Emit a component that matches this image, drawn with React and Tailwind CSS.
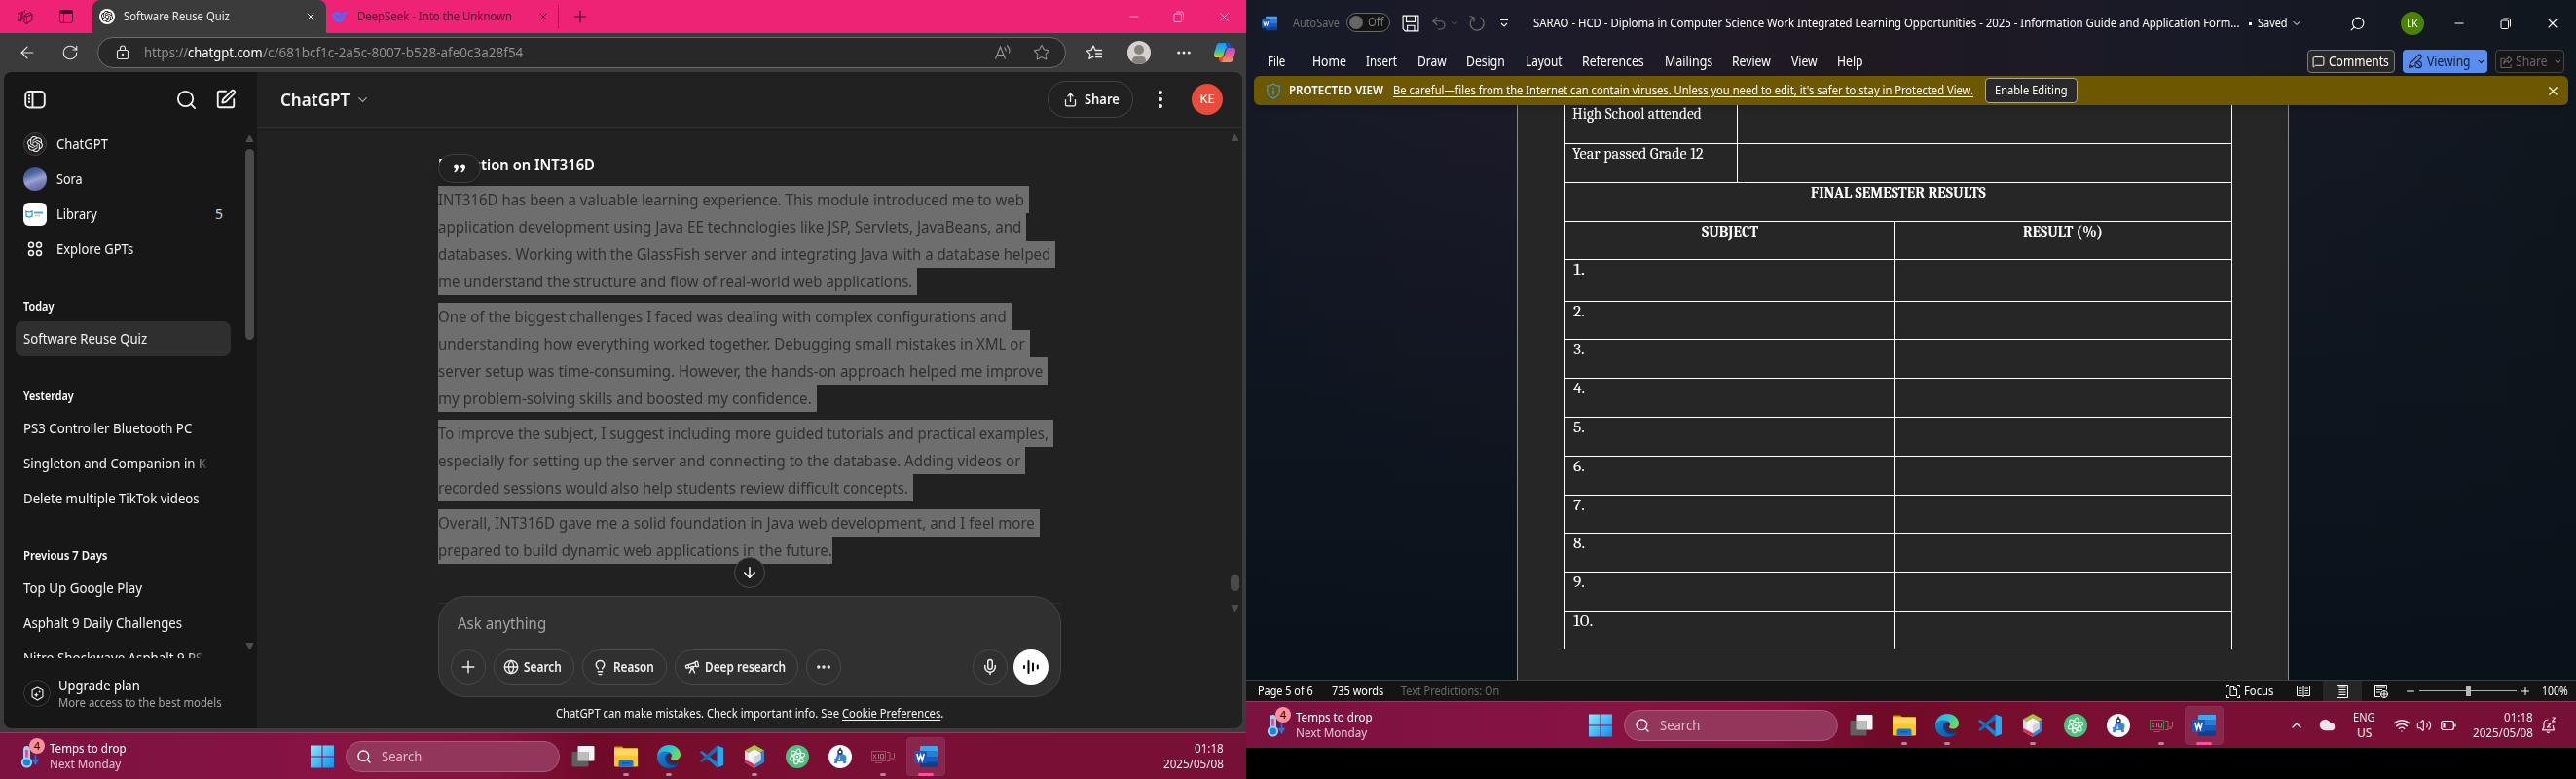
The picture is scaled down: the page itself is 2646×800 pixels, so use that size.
import React, { useLayoutEffect, useRef, useState } from "react";
import {
  ArrowLeft, ArrowDown, RotateCw, X, Plus, Minus, Search, Star, ChevronDown, ChevronUp,
  Globe, Lightbulb, Telescope, Mic, Ellipsis, EllipsisVertical, Share, SquarePen,
  Undo2, Wifi, Volume2, Cloud, MessageSquare,
} from "lucide-react";
import { SiOpenai } from "react-icons/si";

/* One line of text, condensed or widened so that it fills the given width. */
function Fit({ w, className = "", children }) {
  const ref = useRef(null);
  const [scale, setScale] = useState(1);
  useLayoutEffect(() => {
    setScale(w / ref.current.offsetWidth);
  }, [w, children]);
  return (
    <span className={"block shrink-0 whitespace-pre " + className} style={{ width: w }}>
      <span ref={ref} className="inline-block origin-left align-top [text-decoration:inherit]" style={{ transform: `scaleX(${scale})` }}>{children}</span>
    </span>
  );
}

/* ---------- small drawings ---------- */
const WordIcon = ({ className }) => (
  <svg viewBox="0 0 24 24" className={className}>
    <rect x="6" y="1" width="18" height="6" rx="1" fill="#41a5ee" />
    <rect x="6" y="6" width="18" height="6" fill="#2b7cd3" />
    <rect x="6" y="12" width="18" height="6" fill="#185abd" />
    <path d="M6 17.500h18V22a1 1 0 0 1-1 1H7a1 1 0 0 1-1-1z" fill="#103f91" />
    <rect x="0" y="6" width="13" height="13" rx="1.2" fill="#185abd" />
    <path d="M2.800 9l1.900 7 1.800-6 1.800 6 1.900-7" fill="none" stroke="#fff" strokeWidth="1.500" />
  </svg>
);
const WeatherIcon = () => (
  <svg viewBox="0 0 24 32" className="h-8 w-6">
    <rect x="3" y="7" width="7" height="18" rx="3.5" fill="#9cd0f5" />
    <rect x="5.2" y="11" width="2.6" height="13" fill="#e0457b" />
    <circle cx="6.5" cy="24" r="5.6" fill="#9cd0f5" />
    <circle cx="6.5" cy="24" r="3.6" fill="#1a86d8" />
    <path d="M15.500 16v7M13 21.500l2.500 4 2.500-4z" stroke="#2f6fe0" strokeWidth="1.500" fill="#2f6fe0" />
  </svg>
);
const WindowsLogo = () => (
  <svg viewBox="0 0 24 24" className="size-6">
    <defs>
      <linearGradient id="win" x1="0" y1="0" x2="1" y2="1">
        <stop offset="0" stopColor="#8beaff" /><stop offset="1" stopColor="#0a8ff0" />
      </linearGradient>
    </defs>
    <path d="M0 .5h11.500v11H0zM12.500.5H24v11H12.500zM0 12.500h11.500v11H0zM12.500 12.500H24v11H12.500z" fill="url(#win)" />
  </svg>
);
const TaskView = () => (
  <svg viewBox="0 0 24 24" className="size-6">
    <rect x="6.500" y="1" width="17" height="15.500" rx="1" fill="#f4f4f4" />
    <rect x="0.500" y="7" width="17" height="15.500" rx="1" fill="#5f5f5f" />
    <rect x="6.500" y="7" width="11" height="9.500" fill="#bdbdbd" />
  </svg>
);
const Folder = () => (
  <svg viewBox="0 0 24 24" className="size-6">
    <path d="M0 2.500a1 1 0 0 1 1-1h7l2.500 2.500H0z" fill="#d9930a" />
    <rect x="0" y="3.500" width="24" height="19" rx="1" fill="#fdc62f" />
    <path d="M0 3.500h24v7H0z" fill="#ffd75e" />
    <path d="M4.500 22.500v-5a2 2 0 0 1 2-2h11a2 2 0 0 1 2 2v5z" fill="#1478cf" />
    <path d="M8 18.800h8" stroke="#0b4f92" strokeWidth="1.200" />
  </svg>
);
const EdgeLogo = () => (
  <svg viewBox="0 0 24 24" className="size-6">
    <defs>
      <linearGradient id="edg" x1="0" y1="0" x2="1" y2=".4">
        <stop offset="0" stopColor="#2aa9e8" /><stop offset=".55" stopColor="#2cc5cf" /><stop offset="1" stopColor="#68dd5a" />
      </linearGradient>
      <linearGradient id="edb" x1="0" y1="0" x2="1" y2="1">
        <stop offset="0" stopColor="#0f8fe0" /><stop offset="1" stopColor="#0c4a94" />
      </linearGradient>
    </defs>
    <path d="M0 12a12 12 0 0 1 12-12c7 0 12 4.600 12 10 0 3.500-2.800 5.600-6 5.600-2.400 0-4-.8-4-1.800 0-.7 1-1.200 1-2.800C15 8.500 12.500 7 9 7c-4 0-8 2-9 5z" fill="url(#edg)" />
    <path d="M0 12c.8-3.500 4.500-5.500 8.500-5.500 2.500 0 4.500.8 5.500 2-4-.5-6 2.500-5.500 6 .5 4 4 6.500 7.500 6.500 2 0 4-.7 5.800-1.800C19.500 22.500 15.800 24 12 24 5 24 0 18.500 0 12z" fill="url(#edb)" />
    <path d="M8.400 14c.2 4 3.600 7 7.600 7 2 0 4-.7 5.800-1.800.5-.6.200-1-.5-.7-5.300 2.200-10.300-.5-10.300-5 0-2 1-3.300 2.300-4-3-.6-5 1.500-4.900 4.500z" fill="#0a3f80" />
  </svg>
);
const VsCode = () => (
  <svg viewBox="0 0 24 24" className="size-6">
    <path d="M0 7.500l2-1.500 15.500 12v5.500z" fill="#1284d2" />
    <path d="M0 16.500L2 18 17.500 6V.5z" fill="#0a6ebd" />
    <path d="M17.500.5L24 3v18l-6.500 2.500z" fill="#29a8f1" />
  </svg>
);
const NetBeans = () => (
  <svg viewBox="0 0 24 24" className="size-6">
    <path d="M12 0l10 5.500-10 6-10-6z" fill="#a6c04a" />
    <path d="M2 5.500l10 6V24L2 18z" fill="#d8d8de" />
    <path d="M22 5.500l-10 6V24l10-6z" fill="#3f7fd0" />
    <path d="M2 15l10 5v4L2 18z" fill="#d4305c" />
    <path d="M12 4.500l6.500 3.800v7.500L12 20l-6.500-4.200V8.300z" fill="#f4f4f4" />
    <path d="M12 12l6.500-3.700v7.500L12 20z" fill="#cfd2d8" />
  </svg>
);
const Atom = () => (
  <svg viewBox="0 0 24 24" className="size-6">
    <circle cx="12" cy="12" r="12" fill="#4fbf80" />
    <g fill="none" stroke="#e8f8ee" strokeWidth="1.100">
      <ellipse cx="12" cy="12" rx="3" ry="8" transform="rotate(12 12 12)" />
      <ellipse cx="12" cy="12" rx="3" ry="8" transform="rotate(72 12 12)" />
      <ellipse cx="12" cy="12" rx="3" ry="8" transform="rotate(132 12 12)" />
    </g>
    <circle cx="12" cy="12" r="1.300" fill="#fff" />
  </svg>
);
const Studio = () => (
  <svg viewBox="0 0 24 24" className="size-6">
    <circle cx="12" cy="12" r="12" fill="#fff" />
    <circle cx="15" cy="13" r="3.500" fill="#36a566" />
    <path d="M12 6.500L7 19M12 6.500L17 19" stroke="#3b7df0" strokeWidth="3" fill="none" />
    <path d="M6 14.500c3.500 2.500 8.500 2.500 12 0" stroke="#3b7df0" strokeWidth="1.800" fill="none" />
    <circle cx="12" cy="7" r="2" fill="#fff" stroke="#253445" strokeWidth="1.400" />
    <path d="M12 2.800v2.500" stroke="#253445" strokeWidth="1.600" />
  </svg>
);
const X10 = () => (
  <svg viewBox="0 0 24 24" className="size-6">
    <rect x=".5" y="6.500" width="14" height="10" fill="none" stroke="#2f8a46" />
    <path d="M2 9.500l3 4.500M5 9.500L2 14M7.500 9v5M9.500 9.500h3v4.500h-3z" stroke="#a8908f" strokeWidth=".8" fill="none" />
    <path d="M16 7.500h3v9h-3M21 13v3M23.500 8v5l-2 3" stroke="#a8606f" strokeWidth="1" fill="none" />
    <path d="M4 18.500h7" stroke="#2f8a46" strokeWidth="1" />
  </svg>
);
const Restore = ({ className }) => (
  <svg viewBox="0 0 12 12" className={className} fill="none" stroke="currentColor">
    <rect x="1" y="3" width="7.500" height="8.500" rx="1" />
    <path d="M3.500 1h5a2 2 0 0 1 2 2v6.500" />
  </svg>
);
const Copilot = () => (
  <svg viewBox="0 0 22 20" className="h-5 w-[22px]">
    <defs>
      <linearGradient id="cpa" x1="0" y1="0" x2="0" y2="1">
        <stop offset="0" stopColor="#1d8ff2" /><stop offset=".5" stopColor="#28b8d8" /><stop offset=".8" stopColor="#7fca4d" /><stop offset="1" stopColor="#f0c62c" />
      </linearGradient>
      <linearGradient id="cpb" x1="0" y1="0" x2="0" y2="1">
        <stop offset="0" stopColor="#a64de8" /><stop offset=".5" stopColor="#ef5a93" /><stop offset="1" stopColor="#fb9a4b" />
      </linearGradient>
    </defs>
    <path d="M6 0h8c1.500 0 2 1 2.500 2.500L17 5h-3c-2 0-2.500 1-3 3l-1.500 5c-.5 1.500-1 2-2.500 2H3c-2.500 0-3.500-2-2.800-4.500L2.500 3C3 1 4 0 6 0z" fill="url(#cpa)" />
    <path d="M12 0h2c1.500 0 2 1 2.500 2.500L17 5h-4z" fill="#1a49c9" />
    <path d="M16 20H8c-1.500 0-2-1-2.500-2.500L5 15h3c2 0 2.500-1 3-3l1.500-5c.5-1.500 1-2 2.500-2h4c2.500 0 3.500 2 2.800 4.500L19.500 17c-.5 2-1.500 3-3.500 3z" fill="url(#cpb)" />
    <path d="M5 15h4l-.5 5H8c-1.500 0-2-1-2.500-2.500z" fill="#f0442e" />
  </svg>
);
const Tri = ({ down }) => (
  <svg viewBox="0 0 9 8" className="h-[8px] w-[9px]">
    <path d={down ? "M1 .5h7L4.500 7z" : "M1 7.500h7L4.500 1z"} fill="#4d4d4d" stroke="#4d4d4d" strokeLinejoin="round" />
  </svg>
);
const SidebarIcon = () => (
  <svg viewBox="0 0 24 24" className="size-6" fill="none" stroke="#f0f0f0" strokeWidth="1.900">
    <rect x="2.200" y="4" width="19.600" height="16.500" rx="4" />
    <path d="M9.500 4v16.500M5 8.200h2M5 11.500h2M5 14.800h2" />
  </svg>
);
const SleepBell = ({ className }) => (
  <svg viewBox="0 0 16 18" className={className} fill="none" stroke="currentColor" strokeWidth="1.200" strokeLinejoin="round">
    <path d="M7.500 3C4.500 3 3 5 3 7.500V11l-1.500 2.800h12L12.500 11V9M6 15.500a1.700 1.700 0 0 0 3 0" />
    <path d="M6.500 7h3.500l-3.500 4H10M11.500 1h3l-3 3.800h3" />
  </svg>
);
const ViewingPen = ({ className }) => (
  <svg viewBox="0 0 18 18" className={className} fill="none" stroke="currentColor" strokeWidth="1.200" strokeLinejoin="round">
    <path d="M1.500 16.500l1-4.500L12.500 2a2 2 0 0 1 3 3L12 8.500M1.500 16.500L6 15.500M2.500 12L6 15.500l1.500-1.500" />
    <circle cx="12.500" cy="12.800" r="3.700" /><path d="M10 10.200l5 5.200" />
  </svg>
);
const ShareOut = ({ className }) => (
  <svg viewBox="0 0 14 14" className={className} fill="none" stroke="currentColor" strokeWidth="1.100" strokeLinejoin="round">
    <path d="M5 3.500H1v10h11V10" /><path d="M9 1l4 3.800-4 3.700V6.300C6.500 6.200 5 7.500 4 9.500 4.200 6 6 3.800 9 3.500z" />
  </svg>
);

/* ---------- Windows taskbar ---------- */
const apps = [
  { el: <TaskView /> }, { el: <Folder />, run: true }, { el: <EdgeLogo />, run: true }, { el: <VsCode /> },
  { el: <NetBeans />, run: true }, { el: <Atom /> }, { el: <Studio /> }, { el: <X10 />, run: true },
];
function Taskbar({ weatherClass, children }) {
  return (
    <div className="flex h-12 shrink-0 items-center border-t border-[#8d3f5f] bg-[linear-gradient(90deg,#7c1240_0%,#871343_28%,#84113e_40%,#6f0a28_48%,#760d2b_54%,#7a0f34_66%,#771036_100%)] text-xs text-[#f6e6ec]">
      <div className={"flex shrink-0 items-center " + weatherClass}>
        <div className="relative ml-[21px] h-9 w-[30px]">
          <WeatherIcon />
          <span className="absolute top-[-1px] left-[9px] grid size-4 place-items-center rounded-full bg-[#f7919f] text-[11px] leading-none text-black">4</span>
        </div>
        <div className="leading-4">
          <Fit w={79} className="text-white">Temps to drop</Fit>
          <Fit w={73} className="text-[#e6c3d0]">Next Monday</Fit>
        </div>
      </div>
      <WindowsLogo />
      <div className="ml-3 flex h-8 w-[220px] shrink-0 items-center rounded-full border border-[#a85a78] bg-[#93365b]">
        <Search className="ml-[10px] size-4 text-white" strokeWidth={2} />
        <Fit w={41} className="ml-[10px] text-sm text-[#e2bccb]">Search</Fit>
      </div>
      <div className="ml-1 flex gap-1">
        {apps.map((a, i) => (
          <div key={i} className="relative grid size-10 place-items-center">
            {a.el}
            {a.run && <span className="absolute bottom-0 left-[17px] h-[3px] w-[6px] rounded-full bg-[#bd8199]" />}
          </div>
        ))}
        <div className="relative grid size-10 place-items-center rounded border border-[#8e2c53] bg-[#88274b]">
          <WordIcon className="size-6" />
          <span className="absolute bottom-[-1px] left-[11px] h-[3px] w-4 rounded-full bg-[#ff4f9d]" />
        </div>
      </div>
      {children}
    </div>
  );
}
const Clock = () => (
  <div className="flex flex-col items-end leading-4">
    <Fit w={30}>01:18</Fit>
    <Fit w={62}>2025/05/08</Fit>
  </div>
);

/* ---------- Browser ---------- */
const chats = [
  ["Today", 32, [["Software Reuse Quiz", 127]]],
  ["Yesterday", 52, [["PS3 Controller Bluetooth PC", 173], ["Singleton and Companion in K", 188], ["Delete multiple TikTok videos", 181]]],
  ["Previous 7 Days", 86, [["Top Up Google Play", 122], ["Asphalt 9 Daily Challenges", 163], ["Nitro Shockwave Asphalt 9 PS", 184]]],
];
const paragraphs = [
  [["INT316D has been a valuable learning experience. This module introduced me to web", 607], ["application development using Java EE technologies like JSP, Servlets, JavaBeans, and", 604], ["databases. Working with the GlassFish server and integrating Java with a database helped", 634], ["me understand the structure and flow of real-world web applications.", 492]],
  [["One of the biggest challenges I faced was dealing with complex configurations and", 589], ["understanding how everything worked together. Debugging small mistakes in XML or", 608], ["server setup was time-consuming. However, the hands-on approach helped me improve", 626], ["my problem-solving skills and boosted my confidence.", 389]],
  [["To improve the subject, I suggest including more guided tutorials and practical examples,", 632], ["especially for setting up the server and connecting to the database. Adding videos or", 603], ["recorded sessions would also help students review difficult concepts.", 488]],
  [["Overall, INT316D gave me a solid foundation in Java web development, and I feel more", 618], ["prepared to build dynamic web applications in the future.", 405]],
];

function Tabs() {
  return (
    <div className="flex h-[34px] shrink-0 items-center bg-[#ef2375] text-xs text-[#4d0a26]">
      <svg viewBox="0 0 16 16" className="ml-[18px] size-4" fill="none" stroke="#4d0a26">
        <path d="M.8 5.500L5 3v8L.8 12.500zM3.500 13.500V6l4-4.500v2.500M7 6.500l5.500-2.500 2.500 1.500v6l-5.500 4-2.500-1.500zM7 6.500l2.500 1.500L15 5.500M9.500 8v7" strokeLinejoin="round" />
      </svg>
      <svg viewBox="0 0 16 16" className="ml-[26px] size-4" fill="none" stroke="#4d0a26">
        <rect x="1.500" y="1.500" width="13" height="13" rx="2" /><path d="M1.500 3.500h13M5.500 5v9" /><path d="M2 2h12v2.500H2z" fill="#4d0a26" />
      </svg>
      <div className="ml-[19px] flex h-full w-[240px] items-center rounded-t-lg bg-[#3b3b3b] text-[#ececec]">
        <span className="ml-[7px] grid size-4 place-items-center rounded-full bg-white text-black"><SiOpenai className="size-3" /></span>
        <Fit w={109} className="ml-[9px]">Software Reuse Quiz</Fit>
        <X className="ml-[77px] size-3" strokeWidth={2} />
      </div>
      <div className="flex h-6 w-[239px] items-center border-r border-[#8e1446]">
        <svg viewBox="0 0 24 24" className="ml-[6px] size-4" fill="#4d6bfe">
          <path d="M1 8c2-3 6-4 9-3 2 .6 3.500 2 5 3.500 1-1 1-3 1-4.500 1.500 1.500 2.500 2 4 1.500 1.500-.3 2-1 3.500-1-.5 3-1.500 4.500-4 5.500C20 15 17 20 12 21 6 22 0 16 1 8z" />
          <path d="M5 10c3 0 6 3 8 7M12 9.500c2 0 3.500 1.500 3.500 3" stroke="#ef2375" strokeWidth="1.800" fill="none" />
        </svg>
        <Fit w={159} className="ml-[10px]">DeepSeek - Into the Unknown</Fit>
        <X className="ml-[26px] size-3" strokeWidth={2} />
      </div>
      <Plus className="ml-[12px] size-[20px]" strokeWidth={1.300} />
      <div className="ml-auto flex text-[#ffa9c9]">
        <span className="grid w-[46px] place-items-center"><Minus className="size-[14px]" strokeWidth={1.500} /></span>
        <span className="grid w-[46px] place-items-center"><Restore className="size-3" /></span>
        <span className="grid w-[46px] place-items-center"><X className="size-[15px]" strokeWidth={1.400} /></span>
      </div>
    </div>
  );
}

function Toolbar() {
  return (
    <div className="flex h-10 shrink-0 items-center bg-[#3b3b3b] text-[#e6e6e6]">
      <ArrowLeft className="ml-[18px] size-5" strokeWidth={1.400} />
      <RotateCw className="ml-[25px] size-[18px]" strokeWidth={1.500} />
      <div className="ml-[19px] flex h-8 w-[995px] items-center rounded-full border border-[#6b6b6b] bg-[#282828] text-sm text-[#8f8f8f]">
        <svg viewBox="0 0 16 16" className="ml-[17px] size-4" fill="none" stroke="#e6e6e6" strokeWidth="1.100">
          <rect x="2.500" y="5.500" width="11" height="9" rx="1.500" /><path d="M5.500 5.500V3.500a2.500 2.500 0 0 1 5 0v2" /><circle cx="8" cy="10" r=".6" fill="#e6e6e6" />
        </svg>
        <Fit w={45} className="ml-[14px]">https://</Fit>
        <Fit w={77} className="text-white">chatgpt.com</Fit>
        <Fit w={267}>/c/681bcf1c-2a5c-8007-b528-afe0c3a28f54</Fit>
        <svg viewBox="0 0 18 18" className="ml-auto size-[18px]" fill="none" stroke="#9a9a9a" strokeWidth="1.100">
          <path d="M1.500 15.500L6.500 3l5 12.500M3 11.500h7M10.500 3.500c1.300 1 1.800 2.500 1.500 4M13 1.500c2.500 2 3.500 5 2.500 8" />
        </svg>
        <Star className="mr-[15px] ml-[22px] size-[18px]" strokeWidth={1.500} />
      </div>
      <svg viewBox="0 0 18 18" className="ml-[20px] size-[18px]" fill="none" stroke="#e6e6e6" strokeWidth="1.300" strokeLinejoin="round" strokeLinecap="round">
        <path d="M10 6.200L8 2 6 6.400 1.300 7.100l3.400 3.300-.8 4.900L8 13.200M10 6.500h6.500M10.500 10h6M10.500 13.500h6" />
      </svg>
      <span className="ml-[25px] grid size-6 place-items-center overflow-hidden rounded-full bg-[#d5d2ce]">
        <svg viewBox="0 0 24 24" className="size-6" fill="#85817d"><circle cx="12" cy="9" r="5" /><ellipse cx="12" cy="20" rx="7" ry="5" /></svg>
      </span>
      <Ellipsis className="ml-[25px] size-[18px]" strokeWidth={2.200} />
      <span className="ml-[22px]"><Copilot /></span>
    </div>
  );
}

function Sidebar() {
  return (
    <div className="flex w-[260px] shrink-0 flex-col bg-[#171717] text-sm text-[#f3f3f3]">
      <div className="flex h-14 shrink-0 items-center pr-[21px] pl-5">
        <SidebarIcon />
        <Search className="ml-auto size-[23px]" strokeWidth={1.900} />
        <SquarePen className="ml-[18px] size-[22px]" strokeWidth={2} />
      </div>
      <div className="flex h-[546px] shrink-0 overflow-hidden">
        <div className="w-[233px] pl-3">
          <div className="flex h-9 items-center pl-2">
            <span className="grid size-6 place-items-center rounded-full border border-[#444] bg-[#212121]"><SiOpenai className="size-4" /></span>
            <Fit w={53} className="ml-[10px]">ChatGPT</Fit>
          </div>
          <div className="flex h-9 items-center pl-2">
            <span className="size-6 rounded-full bg-[linear-gradient(160deg,#2c4a86_5%,#5069a2_30%,#9aa3d6_52%,#7c80b8_68%,#565a94)]" />
            <Fit w={27} className="ml-[10px]">Sora</Fit>
          </div>
          <div className="flex h-9 items-center pl-2">
            <span className="flex size-6 items-center justify-center rounded-md bg-white">
              <svg viewBox="0 0 20 10" className="h-[10px] w-5">
                <path d="M1 2l3 1 3-1v5L4 8 1 7z" fill="none" stroke="#2b9bd8" strokeWidth="1.300" />
                <path d="M9 3.500h9" stroke="#4aa9dc" strokeWidth="2" /><path d="M10 6.500h5" stroke="#f3c04a" strokeWidth="1.500" />
              </svg>
            </span>
            <Fit w={42} className="ml-[10px]">Library</Fit>
            <Fit w={8} className="mr-2 ml-auto text-[#d0d0d0]">5</Fit>
          </div>
          <div className="flex h-9 items-center pl-2">
            <svg viewBox="0 0 24 24" className="size-6" fill="none" stroke="#f0f0f0" strokeWidth="1.500">
              <circle cx="8" cy="7.800" r="2.500" /><circle cx="16" cy="7.800" r="2.500" /><circle cx="8" cy="16" r="2.500" /><circle cx="16" cy="16" r="2.500" />
            </svg>
            <Fit w={79} className="ml-[10px]">Explore GPTs</Fit>
          </div>
          {chats.map(([title, tw, items], g) => (
            <React.Fragment key={title}>
              <div className="flex h-14 items-end pb-[7px] pl-2 text-xs leading-4 font-semibold text-white"><Fit w={tw}>{title}</Fit></div>
              {items.map(([t, w]) => (
                <div key={t} className={"flex h-9 items-center rounded-lg pl-2 " + (g === 0 ? "bg-[#2f2f2f]" : "")}>
                  <Fit w={w} className={w > 183 ? "[mask-image:linear-gradient(90deg,#000_92%,#0003)]" : ""}>{t}</Fit>
                </div>
              ))}
            </React.Fragment>
          ))}
        </div>
        <div className="mr-[3px] ml-auto flex w-[9px] flex-col py-2">
          <Tri />
          <span className="mt-[7px] h-[196px] w-[9px] rounded-full bg-[#4a4a4a]" />
          <span className="mt-auto"><Tri down /></span>
        </div>
      </div>
      <div className="flex flex-1 items-center pl-5">
        <span className="grid size-7 place-items-center rounded-full border border-[#3a3a3a]">
          <svg viewBox="0 0 16 16" className="size-[15px]" fill="none" stroke="#f0f0f0" strokeWidth="1.200">
            <path d="M8 1l5.800 3v7.500L8 15l-5.800-3.500V4z" strokeLinejoin="round" />
            <path d="M6.700 6.500l.8 2 2 .8-2 .8-.8 2-.8-2-2-.8 2-.8zM10.300 4l.5 1.200 1.200.5-1.200.5-.5 1.200-.5-1.200-1.200-.5 1.200-.5z" fill="#f0f0f0" stroke="none" />
          </svg>
        </span>
        <div className="ml-[8px]">
          <Fit w={84} className="leading-5 text-white">Upgrade plan</Fit>
          <Fit w={168} className="text-xs leading-4 text-[#a5a5a5]">More access to the best models</Fit>
        </div>
      </div>
    </div>
  );
}

const pill = "flex h-9 shrink-0 items-center rounded-full border border-[#4a4a4a] ";

function Chat() {
  return (
    <div className="relative flex flex-1 flex-col bg-[#212121]">
      <div className="flex h-[57px] shrink-0 items-center border-b border-[#2e2e2e] pr-5 pl-6 text-[#f3f3f3]">
        <Fit w={71} className="text-lg font-semibold">ChatGPT</Fit>
        <ChevronDown className="ml-[6px] size-[15px] text-[#a5a5a5]" />
        <div className="ml-auto flex h-[38px] w-[88px] items-center rounded-full border border-[#424242]">
          <Share className="ml-[15px] size-[15px]" strokeWidth={2} />
          <Fit w={36} className="ml-[7px] text-sm font-semibold">Share</Fit>
        </div>
        <EllipsisVertical className="ml-4 size-6" fill="currentColor" strokeWidth={2} />
        <span className="ml-5 grid size-8 place-items-center rounded-full bg-[#e84c3d] text-white"><Fit w={15} className="text-[13px]">KE</Fit></span>
      </div>

      <div className="relative mx-auto w-[640px]">
        <div className="flex h-[60px] items-center pt-[16px] text-base font-semibold text-white"><Fit w={161}>Reflection on INT316D</Fit></div>
        <span className="absolute top-[27px] left-0 flex h-[30px] w-11 items-center justify-center rounded-[15px] border border-[#3f3f3f] bg-[#212121] shadow-lg">
          <svg viewBox="0 0 14 10" className="h-[10px] w-[14px]" fill="#fff">
            <path d="M1 3a2.500 2.500 0 0 1 5 0c0 3-1.500 5.500-4 6.500l-.6-1.200C2.500 7.500 3 6.500 3 5.500A2.500 2.500 0 0 1 1 3zM8 3a2.500 2.500 0 0 1 5 0c0 3-1.500 5.500-4 6.500l-.6-1.200c1.100-.8 1.600-1.800 1.600-2.800A2.500 2.500 0 0 1 8 3z" />
          </svg>
        </span>
        <div className="flex flex-col gap-2 text-base leading-7 text-[#303030]">
          {paragraphs.map((lines, p) => (
            <div key={p} className="flex flex-col items-start">
              {lines.map(([t, w], i) => {
                const last = p === 3 && i === 1;
                return (
                  <div key={i} className={"bg-[#6e6e6e] " + (last ? "" : "pr-[5px]")}><Fit w={last ? w : w - 5}>{t}</Fit></div>
                );
              })}
            </div>
          ))}
        </div>
        <span className="absolute top-[441px] left-[304px] z-10 grid size-8 place-items-center rounded-full border border-[#4a4a4a] bg-[#212121] text-white"><ArrowDown className="size-[18px]" /></span>
        <span className="absolute top-[488px] left-0 h-px w-full bg-[#2e2e2e]" />

        <div className="relative mt-[33px] flex h-[104px] flex-col justify-between rounded-[28px] border border-[#454545] bg-[#303030] px-3 pt-[15px] pb-[12px] text-[#efefef]">
          <Fit w={91} className="ml-[7px] text-base leading-6 text-[#a3a3a3]">Ask anything</Fit>
          <div className="flex items-center text-sm font-semibold">
            <span className={pill + "w-9 justify-center"}><Plus className="size-5" strokeWidth={1.700} /></span>
            <span className={pill + "ml-2 w-[83px]"}><Globe className="ml-[9px] size-4" /><Fit w={39} className="ml-[5px]">Search</Fit></span>
            <span className={pill + "ml-2 w-[87px]"}><Lightbulb className="ml-[9px] size-[17px]" /><Fit w={42} className="ml-[5px]">Reason</Fit></span>
            <span className={pill + "ml-2 w-[127px]"}><Telescope className="ml-[9px] size-4" /><Fit w={83} className="ml-[5px]">Deep research</Fit></span>
            <span className={pill + "ml-2 w-9 justify-center"}><Ellipsis className="size-[18px]" strokeWidth={2.500} /></span>
            <span className={pill + "ml-auto w-9 justify-center"}><Mic className="size-[18px]" /></span>
            <span className="ml-[6px] grid size-9 place-items-center rounded-full bg-white">
              <svg viewBox="0 0 18 18" className="size-[18px]" stroke="#000" strokeWidth="2" strokeLinecap="round"><path d="M2 8v2M6.500 3v12M11 5.500v7M15.800 7.500v3" /></svg>
            </span>
          </div>
        </div>
        <div className="flex h-8 items-center justify-center pt-[2px] text-xs text-[#f3f3f3]">
          <Fit w={294}>ChatGPT can make mistakes. Check important info. See </Fit>
          <Fit w={101} className="underline underline-offset-2">Cookie Preferences</Fit>
          <span>.</span>
        </div>
      </div>

      <div className="absolute top-[63px] right-[3px] h-[492px] w-[9px]">
        <Tri />
        <span className="absolute top-[453px] left-0 h-[17px] w-[9px] rounded-full bg-[#4a4a4a]" />
        <span className="absolute top-[484px] left-0"><Tri down /></span>
      </div>
    </div>
  );
}

function Browser() {
  return (
    <div className="flex h-[800px] w-[1280px] shrink-0 flex-col">
      <Tabs />
      <Toolbar />
      <div className="flex-1 bg-[#3b3b3b] px-1 pb-1">
        <div className="flex h-[674px] overflow-hidden rounded-lg"><Sidebar /><Chat /></div>
      </div>
      <Taskbar weatherClass="w-[319px]">
        <div className="mr-[23px] ml-auto"><Clock /></div>
      </Taskbar>
    </div>
  );
}

/* ---------- Word ---------- */
const menus = [["Home", 35], ["Insert", 32], ["Draw", 30], ["Design", 40], ["Layout", 38], ["References", 64], ["Mailings", 49], ["Review", 40], ["View", 27], ["Help", 27]];
const numbered = ["h-[43px]", "h-[39px]", "h-10", "h-10", "h-10", "h-10", "h-[39px]", "h-10", "h-10", "h-[39px]"];

function Word() {
  return (
    <div className="flex h-[800px] w-[1366px] shrink-0 flex-col bg-black text-white">
      <div className="flex h-[698px] shrink-0 flex-col bg-[linear-gradient(180deg,#0a121800_10%,#09121a_95%),linear-gradient(90deg,#161a27_0%,#1d1b2a_22%,#201922_45%,#191a27_70%,#10171e_100%)]">
        <div className="flex h-12 shrink-0 items-center text-xs">
          <WordIcon className="ml-4 size-4 shrink-0" />
          <Fit w={48} className="ml-4 text-[#6e6e6e]">AutoSave</Fit>
          <div className="ml-[7px] flex h-5 w-[45px] shrink-0 -translate-y-px items-center rounded-full border border-[#6a6a6a] bg-[#141414] text-[#7a7a7a]">
            <span className="ml-[2px] size-[14px] rounded-full bg-[#666]" /><Fit w={17} className="ml-[5px]">Off</Fit>
          </div>
          <svg viewBox="0 0 16 16" className="ml-3 size-[18px] shrink-0" fill="none" stroke="#fff"><path d="M1 1h14v14H3L1 13zM4 1v5.500h8V1M5 15v-5h6.500v5" /></svg>
          <Undo2 className="ml-[11px] size-[18px] shrink-0 text-[#6e6e6e]" strokeWidth={1.500} />
          <ChevronDown className="ml-[2px] size-[10px] shrink-0 text-[#6e6e6e]" />
          <svg viewBox="0 0 18 18" className="ml-[9px] size-[18px] shrink-0" fill="none" stroke="#6e6e6e" strokeWidth="1.200"><path d="M12.500 3a7 7 0 1 1-7.500.5M1.500 1.500L6 3v4.500" /></svg>
          <svg viewBox="0 0 10 10" className="ml-[14px] size-[10px] shrink-0" fill="none" stroke="#fff" strokeWidth="1.200"><path d="M1 1.500h8M2 5l3 3 3-3" /></svg>
          <Fit w={725} className="ml-[25px]">SARAO - HCD - Diploma in Computer Science Work Integrated Learning Opportunities - 2025 - Information Guide and Application Form...</Fit>
          <span className="ml-[10px] size-[3px] shrink-0 bg-white" />
          <Fit w={31} className="ml-[6px]">Saved</Fit>
          <ChevronDown className="ml-[3px] size-3 shrink-0" />
          <Search className="ml-12 size-[17px] shrink-0 -scale-x-100" strokeWidth={1.500} />
          <span className="ml-9 grid size-6 shrink-0 place-items-center rounded-full bg-[#498205]"><Fit w={12} className="text-[11px]">LK</Fit></span>
          <span className="ml-3 grid w-12 place-items-center"><Minus className="size-[14px]" strokeWidth={1.700} /></span>
          <span className="grid w-12 place-items-center"><Restore className="size-3" /></span>
          <span className="grid w-12 place-items-center"><X className="size-4" strokeWidth={1.600} /></span>
        </div>

        <div className="flex h-[30px] shrink-0 items-center gap-[20.5px] pr-3 pl-[22px] text-sm">
          <Fit w={18} className="mr-[7px]">File</Fit>
          {menus.map(([t, w]) => <Fit key={t} w={w}>{t}</Fit>)}
          <div className="ml-auto flex gap-2">
            <div className="flex h-6 w-[90px] items-center rounded border border-[#7a7a7a] bg-[#292929]"><MessageSquare className="ml-1 size-[13px]" strokeWidth={1.800} /><Fit w={62} className="ml-1">Comments</Fit></div>
            <div className="flex h-6 w-[87px] items-center rounded bg-[#5b8def] text-[#101828]"><ViewingPen className="ml-[5px] size-4" /><Fit w={45} className="ml-1">Viewing</Fit><ChevronDown className="ml-[6px] size-[9px]" strokeWidth={3} /></div>
            <div className="flex h-6 w-[71px] items-center rounded border border-[#454545] bg-[#161616] text-[#666]"><ShareOut className="ml-1 size-[13px]" /><Fit w={33} className="ml-[3px]">Share</Fit><ChevronDown className="ml-[6px] size-[9px]" strokeWidth={3} /></div>
          </div>
        </div>

        <div className="z-10 mx-2 flex h-[30px] shrink-0 items-center rounded-md bg-[#6d5700] text-xs shadow-md">
          <svg viewBox="0 0 16 18" className="ml-3 h-[17px] w-4" fill="none" stroke="#3c96d8" strokeWidth="1.300"><path d="M8 1c2 1.500 4 2.200 6.500 2.300V9c0 4-2.500 6.500-6.500 8-4-1.500-6.500-4-6.500-8V3.300C4 3.200 6 2.500 8 1z" /><path d="M8 8v5M8 5v1.500" strokeWidth="1.800" /></svg>
          <Fit w={97} className="ml-2 font-semibold">PROTECTED VIEW</Fit>
          <Fit w={596} className="ml-[10px] underline underline-offset-2">Be careful—files from the Internet can contain viruses. Unless you need to edit, it's safer to stay in Protected View.</Fit>
          <div className="ml-3 flex h-[26px] w-[95px] items-center justify-center rounded border border-[#a8a8a8] bg-[#292929]"><Fit w={75}>Enable Editing</Fit></div>
          <X className="mr-2 ml-auto size-[15px]" strokeWidth={1.800} />
        </div>

        <div className="ml-[278px] h-[590px] w-[793px] border-x border-[#8c8c8c] bg-[#262626] pl-12">
          <div className="w-[686px] border-x border-white font-['Cambria','Caladea','Noto_Serif','Liberation_Serif',serif] text-base leading-5">
            <div className="flex h-10 border-b border-white"><div className="w-[177px] border-r border-white pl-[7px]"><Fit w={133} className="-mt-px">High School attended</Fit></div></div>
            <div className="flex h-10 border-b border-white"><div className="w-[177px] border-r border-white pl-[7px]"><Fit w={135}>Year passed Grade 12</Fit></div></div>
            <div className="flex h-10 justify-center border-b border-white font-bold"><Fit w={180}>FINAL SEMESTER RESULTS</Fit></div>
            <div className="flex h-[39px] border-b border-white font-bold">
              <div className="flex w-[338px] justify-center border-r border-white"><Fit w={58}>SUBJECT</Fit></div>
              <div className="flex flex-1 justify-center"><Fit w={82}>RESULT (%)</Fit></div>
            </div>
            {numbered.map((h, i) => (
              <div key={i} className={"flex border-b border-white " + h}>
                <div className="w-[338px] border-r border-white pl-[8px]"><Fit w={i === 9 ? 20 : 12}>{i + 1 + "."}</Fit></div>
              </div>
            ))}
          </div>
        </div>
      </div>

      <div className="flex h-[22px] shrink-0 items-center border-t border-[#3d3d3d] bg-[#141414] text-xs">
        <Fit w={57} className="ml-3">Page 5 of 6</Fit>
        <Fit w={53} className="ml-[19px]">735 words</Fit>
        <Fit w={101} className="ml-[18px] text-[#6a6a6a]">Text Predictions: On</Fit>
        <svg viewBox="0 0 14 14" className="ml-auto size-[14px]" fill="none" stroke="#fff"><path d="M3 .5H.5V3M11 .5h2.500V3M3 13.500H.5V11M11 13.500h2.500V11M4 2.500h4L10.500 5v6.500H4zM7.500 2.500V5.500h3" /></svg>
        <Fit w={30} className="ml-1">Focus</Fit>
        <span className="ml-[11px] grid h-full w-10 place-items-center"><svg viewBox="0 0 14 14" className="size-[14px]" fill="none" stroke="#fff"><path d="M.5 1.500H6l1 1 1-1h5.500v10H8l-1 1-1-1H.5zM7 2.500v10M2 4h3.500M2 6.500h3.500M2 9h3.500M8.500 4H12M8.500 6.500H12M8.500 9H12" /></svg></span>
        <span className="grid h-full w-10 place-items-center bg-[#262626]"><svg viewBox="0 0 12 14" className="h-[14px] w-3" fill="none" stroke="#fff"><path d="M.5.5h11v13H.5zM2.500 3h7M2.500 5.500h7M2.500 8h7M2.500 10.500h7" /></svg></span>
        <span className="grid h-full w-10 place-items-center"><svg viewBox="0 0 14 14" className="size-[14px]" fill="none" stroke="#fff"><path d="M6 12.500H.5V.5h12v5M2 3h9M2 5.500h6M2 8h4" /><circle cx="10" cy="10" r="3.500" /><path d="M6.500 10h7M10 6.500v7" /></svg></span>
        <Minus className="ml-1 size-3" strokeWidth={2} />
        <div className="relative ml-[3px] h-px w-[100px] bg-[#b0b0b0]"><span className="absolute top-[-5px] left-[48px] h-[11px] w-[5px] bg-[#b8b8b8]" /></div>
        <Plus className="ml-[3px] size-3" strokeWidth={2} />
        <Fit w={27} className="mr-2 ml-[11px]">100%</Fit>
      </div>

      <Taskbar weatherClass="w-[352px]">
        <ChevronUp className="ml-auto size-4 text-white" />
        <Cloud className="ml-[15px] size-[17px]" fill="#f0e4ea" />
        <div className="ml-[18px] flex flex-col items-center leading-4"><Fit w={23}>ENG</Fit><Fit w={15}>US</Fit></div>
        <Wifi className="ml-[18px] size-[18px]" />
        <Volume2 className="ml-[6px] size-4" strokeWidth={1.700} />
        <svg viewBox="0 0 16 12" className="ml-[9px] h-3 w-4" fill="none" stroke="#fff" strokeWidth="1.200"><rect x=".7" y="1.500" width="12.600" height="9" rx="2" /><path d="M15 4.500v3" /><path d="M2.500 3.500h2v5h-2z" fill="#fff" stroke="none" /></svg>
        <div className="ml-[17px]"><Clock /></div>
        <SleepBell className="mr-[20px] ml-[8px] h-[18px] w-4" />
      </Taskbar>
    </div>
  );
}

export default function App() {
  return (
    <div className="flex h-[800px] w-[2646px] overflow-hidden bg-black font-['Segoe_UI','Noto_Sans','Open_Sans',sans-serif]">
      <Browser />
      <Word />
    </div>
  );
}
